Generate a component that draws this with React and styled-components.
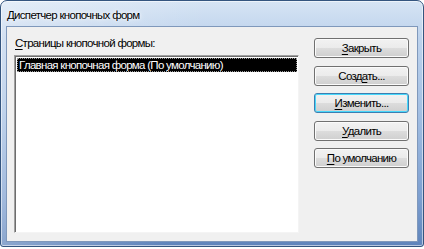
import React, { useState } from 'react'
import styled, { createGlobalStyle } from 'styled-components'

const GlobalStyle = createGlobalStyle`
    html, body {
        margin: 0;
        padding: 0;
        background: #ffffff;
    }
    body {
        font-family: "Liberation Sans", Arial, sans-serif;
        font-size: 11.5px;
        letter-spacing: -0.7px;
        color: #000;
    }
`

const buttons = [
    { key: 'close', pre: '', hot: 'З', post: 'акрыть' },
    { key: 'create', pre: 'Созд', hot: 'а', post: 'ть...' },
    { key: 'edit', pre: '', hot: 'И', post: 'зменить...', isDefault: true },
    { key: 'delete', pre: '', hot: 'У', post: 'далить' },
    { key: 'default', pre: '', hot: 'П', post: 'о умолчанию' },
]

const App = () => {
    const [selected, setSelected] = useState(0)
    const pages = ['Главная кнопочная форма (По умолчанию)']

    return (
        <>
            <GlobalStyle />
            <Window>
                <TitleBar>Диспетчер кнопочных форм</TitleBar>
                <Client>
                    <LeftColumn>
                        <Label><u>С</u>траницы кнопочной формы:</Label>
                        <ListBox>
                            {pages.map((page, index) => (
                                <ListItem
                                    key={index}
                                    $active={index === selected}
                                    onClick={() => setSelected(index)}
                                >
                                    {page}
                                </ListItem>
                            ))}
                        </ListBox>
                    </LeftColumn>
                    <ButtonColumn>
                        {buttons.map(b => (
                            <Button key={b.key} $default={b.isDefault}>
                                {b.pre}<u>{b.hot}</u>{b.post}
                            </Button>
                        ))}
                    </ButtonColumn>
                </Client>
            </Window>
        </>
    )
}

export default App

const Window = styled.div`
    width: 424px;
    height: 247px;
    box-sizing: border-box;
    border: 1px solid #34557f;
    border-radius: 7px 7px 3px 3px;
    padding: 0 5px 4px 5px;
    display: flex;
    flex-direction: column;
    box-shadow: inset 0 0 0 1px rgba(255, 255, 255, 0.55);
    background:
        linear-gradient(100deg, rgba(255, 255, 255, 0.35) 0%, rgba(255, 255, 255, 0) 45%),
        linear-gradient(to bottom, #d6e4f4 0%, #bdd2ec 15%, #a3bfe3 45%, #7d9fd0 80%, #5f84bb 100%);
`

const TitleBar = styled.div`
    height: 25px;
    box-sizing: border-box;
    padding: 7px 0 0 1px;
    line-height: 15px;
    color: #000;
    white-space: nowrap;
    text-shadow: 0 0 6px rgba(255, 255, 255, 0.9), 0 0 3px rgba(255, 255, 255, 0.9);
`

const Client = styled.div`
    flex: 1;
    display: flex;
    box-sizing: border-box;
    border: 1px solid #7f98bb;
    background: #f0f0f0;
    padding: 9px 8px 8px 7px;
`

const LeftColumn = styled.div`
    width: 285px;
    display: flex;
    flex-direction: column;
`

const Label = styled.div`
    line-height: 15px;
    padding-left: 1px;
    margin-bottom: 4px;
    white-space: nowrap;

    u {
        text-decoration-thickness: 1px;
        text-underline-offset: 2px;
    }
`

const ListBox = styled.div`
    flex: 1;
    box-sizing: border-box;
    background: #fff;
    border-top: 1px solid #a0a0a0;
    border-left: 1px solid #a0a0a0;
    border-right: 1px solid #f4f4f4;
    border-bottom: 1px solid #f4f4f4;
    box-shadow: inset 1px 1px 0 #6d6d6d;
    padding: 2px 1px 0 2px;
`

const ListItem = styled.div`
    height: 14px;
    line-height: 14px;
    padding-left: 2px;
    white-space: nowrap;
    overflow: hidden;
    background: ${props => props.$active ? '#000' : 'transparent'};
    color: ${props => props.$active ? '#fff' : '#000'};
    outline: ${props => props.$active ? '1px dotted #9a9a9a' : 'none'};
    outline-offset: -1px;
    cursor: default;
`

const ButtonColumn = styled.div`
    margin-left: 15px;
    padding-top: 2px;
    display: flex;
    flex-direction: column;
    gap: 7.5px;
`

const Button = styled.button`
    width: 95px;
    height: 20px;
    box-sizing: border-box;
    padding: 0;
    font-family: inherit;
    font-size: inherit;
    letter-spacing: inherit;
    line-height: 16px;
    color: #000;
    border-radius: 3px;
    border: 1px solid ${props => props.$default ? '#3c7fb1' : '#707070'};
    background: linear-gradient(to bottom, #f2f2f2 0%, #ebebeb 50%, #dddddd 50%, #cfcfcf 100%);
    box-shadow: inset 0 0 0 1px ${props => props.$default ? '#48d8fb' : '#fbfbfb'};
    white-space: nowrap;

    u {
        text-decoration-thickness: 1px;
        text-underline-offset: 2px;
    }
`
